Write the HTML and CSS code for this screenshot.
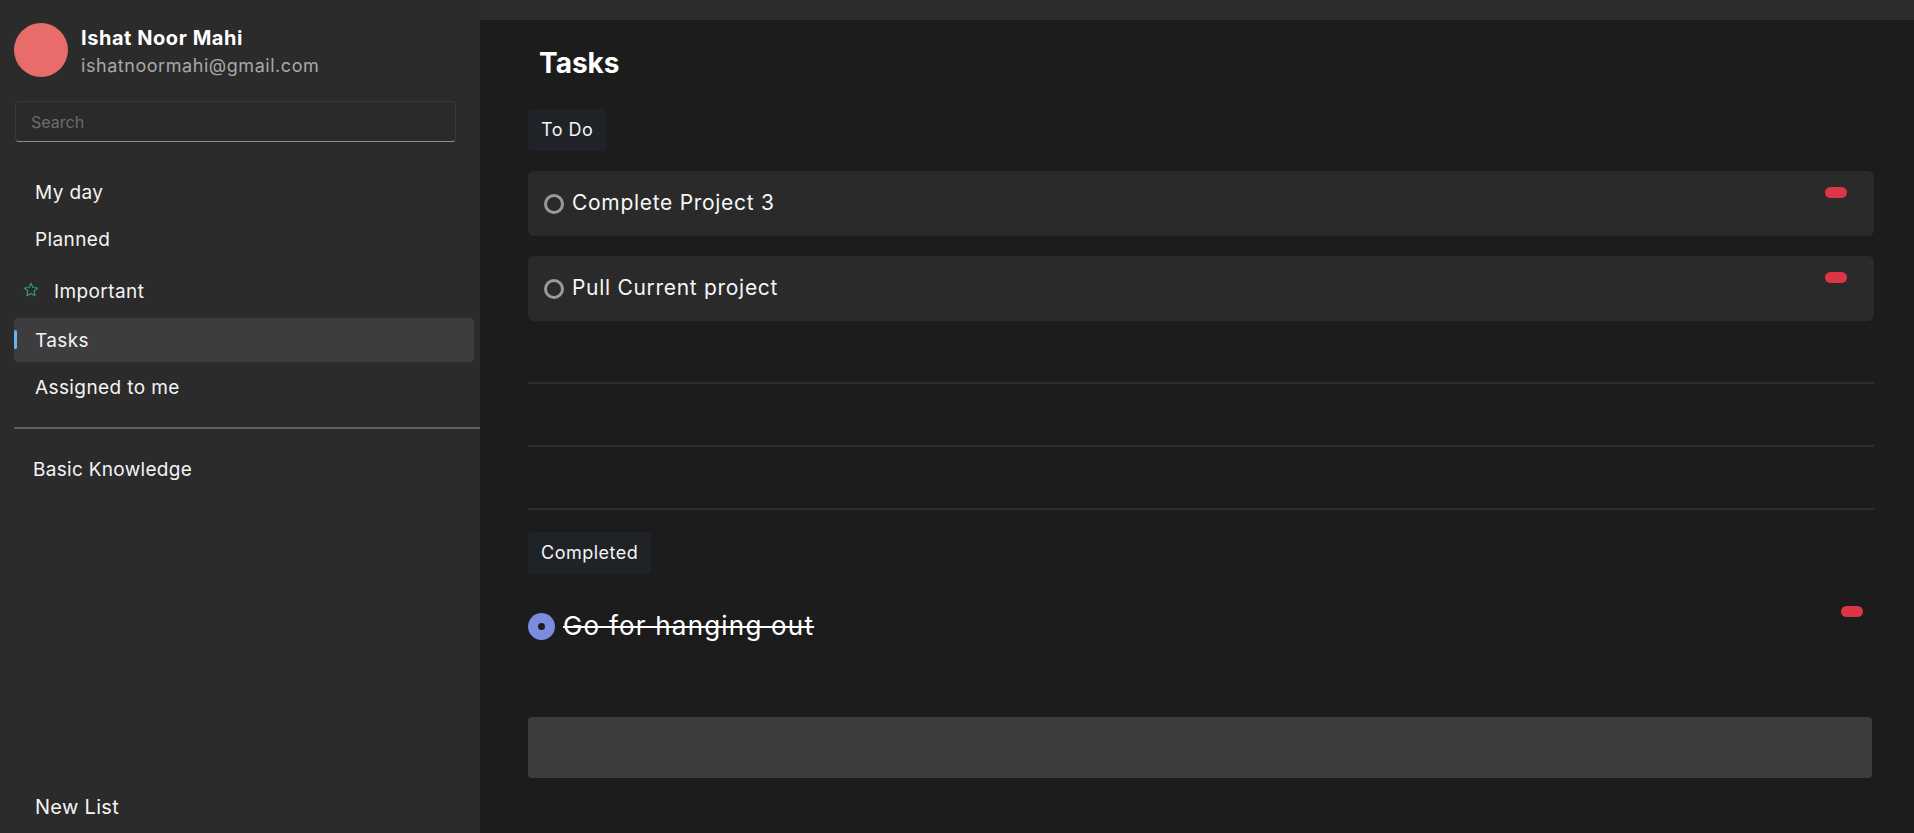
FILE: index.html
```html
<!DOCTYPE html>
<html lang="en">
<head>
<meta charset="utf-8">
<title>Tasks</title>
<link rel="stylesheet" href="styles.css">
</head>
<body>
<div class="app">
  <aside class="sidebar">
    <div class="profile">
      <div class="avatar"></div>
      <div class="who">
        <div class="name">Ishat Noor Mahi</div>
        <div class="email">ishatnoormahi@gmail.com</div>
      </div>
    </div>
    <input class="search" type="text" placeholder="Search">
    <nav class="nav">
      <a class="nav-item">My day</a>
      <a class="nav-item">Planned</a>
      <a class="nav-item nav-important">
        <svg class="star" width="16" height="16" viewBox="0 0 16 16"><path d="M8 1.3l1.95 4.2 4.55.55-3.35 3.1.9 4.5L8 11.4l-4.05 2.25.9-4.5L1.5 6.05l4.55-.55z" fill="none" stroke="#2f9d8f" stroke-width="1.1" stroke-linejoin="round"/></svg>
        <span>Important</span>
      </a>
      <a class="nav-item active">Tasks</a>
      <a class="nav-item">Assigned to me</a>
    </nav>
    <div class="divider"></div>
    <a class="list-item">Basic Knowledge</a>
    <div class="new-list">New List</div>
  </aside>
  <main class="main">
    <div class="topbar"></div>
    <section class="panel">
      <h1 class="title">Tasks</h1>
      <div class="chip">To Do</div>
      <ul class="task-list">
        <li class="task-card">
          <span class="radio"></span>
          <span class="task-text">Complete Project 3</span>
          <span class="pill"></span>
        </li>
        <li class="task-card">
          <span class="radio"></span>
          <span class="task-text">Pull Current project</span>
          <span class="pill"></span>
        </li>
      </ul>
      <div class="empty-row"></div>
      <div class="empty-row"></div>
      <div class="empty-row"></div>
      <div class="chip chip-completed">Completed</div>
      <div class="task-done">
        <span class="radio-done"><span class="dot"></span></span>
        <span class="done-text">Go for hanging out</span>
        <span class="pill pill-done"></span>
      </div>
      <div class="add-box"></div>
    </section>
  </main>
</div>
</body>
</html>
```
FILE: styles.css
```css
* { box-sizing: border-box; }

html, body {
  margin: 0;
  padding: 0;
  height: 100%;
}

body {
  font-family: Inter, "Open Sans", sans-serif;
  color: #f2f2f2;
  background: #2b2b2b;
  overflow: hidden;
}

.app {
  display: grid;
  grid-template-columns: 480px 1fr;
  height: 833px;
}

/* Sidebar */
.sidebar {
  background: #2b2b2b;
  display: flex;
  flex-direction: column;
  padding: 0 0 4px 14px;
}

.profile {
  display: flex;
  align-items: flex-start;
  gap: 13px;
  padding-top: 23px;
  height: 77px;
}

.avatar {
  width: 54px;
  height: 54px;
  border-radius: 50%;
  background: #e76c6a;
  flex: none;
}

.who {
  display: flex;
  flex-direction: column;
  padding-top: 3px;
}

.name {
  font-size: 20px;
  font-weight: 700;
  line-height: 24px;
  letter-spacing: 0.55px;
  color: #ffffff;
}

.email {
  font-size: 18px;
  line-height: 26px;
  margin-top: 3px;
  color: #a8a8a8;
  letter-spacing: 0.55px;
}

.search {
  margin: 24px 0 0 1px;
  width: 441px;
  height: 41px;
  background: #2a2a2a;
  border: 1px solid #383838;
  border-bottom: 1px solid #8c8c8c;
  border-radius: 4px;
  padding: 0 0 0 15px;
  font-family: Inter, sans-serif;
  font-size: 16px;
  color: #dddddd;
  outline: none;
}

.search::placeholder {
  color: #6c6c6c;
}

.nav {
  display: flex;
  flex-direction: column;
  gap: 3px;
  margin-top: 28px;
}

.nav-item {
  position: relative;
  display: flex;
  align-items: center;
  height: 44px;
  width: 460px;
  padding-left: 21px;
  font-size: 19px;
  letter-spacing: 0.4px;
  color: #f4f4f4;
  border-radius: 5px;
}

.nav-important {
  margin-top: 5px;
  margin-bottom: 2px;
  padding-left: 9px;
  gap: 15px;
}

.star {
  flex: none;
  margin-top: -2px;
}

.nav-item.active {
  background: #3d3d3f;
}

.nav-item.active::before {
  content: "";
  position: absolute;
  left: 0;
  top: 12px;
  width: 3px;
  height: 19px;
  border-radius: 2px;
  background: #6ab2f0;
}

.divider {
  margin-top: 18px;
  height: 2px;
  background: #5f5f5f;
}

.list-item {
  display: flex;
  align-items: center;
  height: 44px;
  margin-top: 18px;
  padding-left: 19px;
  font-size: 19px;
  letter-spacing: 0.3px;
  color: #f4f4f4;
}

.new-list {
  margin-top: auto;
  display: flex;
  align-items: center;
  height: 44px;
  padding-left: 21px;
  font-size: 20px;
  letter-spacing: 0.3px;
  color: #f4f4f4;
}

/* Main */
.main {
  display: flex;
  flex-direction: column;
  background: #2c2c2c;
}

.topbar {
  height: 20px;
  flex: none;
}

.panel {
  flex: 1;
  background: #1c1c1c;
  padding: 0 40px 0 48px;
  display: flex;
  flex-direction: column;
  align-items: flex-start;
}

.title {
  margin: 26px 0 0 11px;
  font-size: 28px;
  line-height: 34px;
  font-weight: 700;
  color: #ffffff;
}

.chip {
  margin-top: 29px;
  height: 42px;
  line-height: 41px;
  padding: 0 13px;
  border-radius: 4px;
  background: #1f2226;
  font-size: 18px;
  letter-spacing: 0.5px;
  color: #f4f4f4;
}

.chip-completed {
  margin-top: 22px;
}

.task-list {
  list-style: none;
  margin: 20px 0 0;
  padding: 0;
  width: 100%;
  display: flex;
  flex-direction: column;
  gap: 20px;
}

.task-card {
  display: flex;
  align-items: center;
  height: 65px;
  padding: 0 27px 0 16px;
  border-radius: 6px;
  background: #2a2a2a;
}

.radio {
  width: 20px;
  height: 20px;
  border-radius: 50%;
  border: 3px solid #9a9a9a;
  flex: none;
}

.task-text {
  margin-left: 8px;
  margin-top: -2px;
  font-size: 21px;
  letter-spacing: 0.7px;
  color: #f6f6f6;
  flex: 1;
}

.pill {
  align-self: flex-start;
  margin-top: 16px;
  width: 22px;
  height: 11px;
  border-radius: 6px;
  background: #dc3545;
  flex: none;
}

.empty-row {
  width: 100%;
  height: 63px;
  border-bottom: 2px solid #2d2d2d;
  flex: none;
}

.task-done {
  margin-top: 16px;
  width: 100%;
  height: 72px;
  display: flex;
  align-items: center;
  padding-right: 11px;
}

.radio-done {
  width: 27px;
  height: 27px;
  border-radius: 50%;
  background: #7b8bdd;
  display: flex;
  align-items: center;
  justify-content: center;
  flex: none;
}

.dot {
  width: 7px;
  height: 7px;
  border-radius: 50%;
  background: #1c1c1c;
}

.done-text {
  margin-left: 8px;
  margin-top: -2px;
  font-size: 26px;
  letter-spacing: 1.2px;
  color: #ffffff;
  text-decoration: line-through;
  text-decoration-thickness: 2px;
  flex: 1;
}

.add-box {
  margin-top: 55px;
  width: calc(100% - 2px);
  height: 61px;
  border-radius: 4px;
  background: #3d3d3f;
  flex: none;
}
```
